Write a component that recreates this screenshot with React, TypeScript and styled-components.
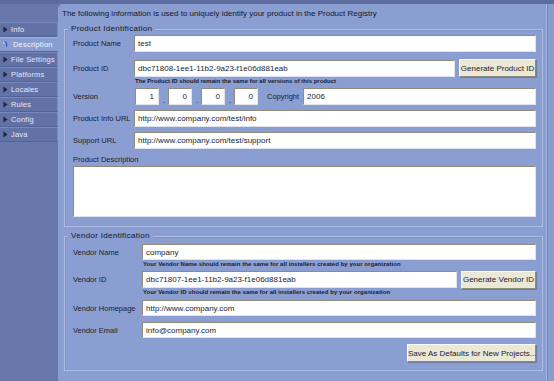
import styled, { createGlobalStyle } from "styled-components";

const GlobalStyle = createGlobalStyle`
    html, body {
        margin: 0;
        padding: 0;
        background: #6878aa;
    }
    body {
        font-family: "Liberation Sans", Arial, sans-serif;
        font-size: 8px;
        color: #1b1d30;
    }
`;

interface ITab {
    title: string,
    active?: boolean
}

const tabs: ITab[] = [
    { title: "Info" },
    { title: "Description", active: true },
    { title: "File Settings" },
    { title: "Platforms" },
    { title: "Locales" },
    { title: "Rules" },
    { title: "Config" },
    { title: "Java" },
];

const Arrow = () => (
    <svg width="5" height="7" viewBox="0 0 5 7">
        <path d="M0.5 0.5 L4.5 3.5 L0.5 6.5 Z" fill="#1d2240" />
    </svg>
);

const ActiveIcon = () => (
    <svg width="6" height="7" viewBox="0 0 6 7">
        <path d="M1 0.5 Q4.5 1.5 3.5 5.5" stroke="#3a4cc8" strokeWidth="1.2" fill="none" />
        <path d="M1 0.5 L1 2.5" stroke="#e8ecff" strokeWidth="1" />
    </svg>
);

export default function App() {
    return (
        <Frame>
            <GlobalStyle />
            <Sidebar>
                {tabs.map((tab) => (
                    <Tab key={tab.title} $active={!!tab.active}>
                        <span className="icon">{tab.active ? <ActiveIcon /> : <Arrow />}</span>
                        <span className="label">{tab.title}</span>
                    </Tab>
                ))}
            </Sidebar>
            <Panel>
                <Intro>The following information is used to uniquely identify your product in the Product Registry</Intro>

                <Group>
                    <legend>Product Identification</legend>
                    <Row $labelWidth={57} $mt={1}>
                        <Label>Product Name</Label>
                        <Field defaultValue="test" />
                    </Row>
                    <Row $labelWidth={57} $mt={7} $height={18}>
                        <Label>Product ID</Label>
                        <Field defaultValue="dbc71808-1ee1-11b2-9a23-f1e06d881eab" />
                        <Button $width={77}>Generate Product ID</Button>
                    </Row>
                    <Hint $indent={62}>The Product ID should remain the same for all versions of this product</Hint>
                    <Row $labelWidth={58} $mt={3}>
                        <Label>Version</Label>
                        <VersionBox defaultValue="1" />
                        <Dot>.</Dot>
                        <VersionBox defaultValue="0" />
                        <Dot>.</Dot>
                        <VersionBox defaultValue="0" />
                        <Dot>.</Dot>
                        <VersionBox defaultValue="0" />
                        <Copyright>Copyright</Copyright>
                        <Field defaultValue="2006" />
                    </Row>
                    <Row $labelWidth={57} $mt={5}>
                        <Label>Product Info URL</Label>
                        <Field defaultValue="http://www.company.com/test/info" />
                    </Row>
                    <Row $labelWidth={57} $mt={5}>
                        <Label>Support URL</Label>
                        <Field defaultValue="http://www.company.com/test/support" />
                    </Row>
                    <BlockLabel>Product Description</BlockLabel>
                    <Description />
                </Group>

                <Group $vendor>
                    <legend>Vendor Identification</legend>
                    <Row $labelWidth={65} $mt={3} $height={16}>
                        <Label>Vendor Name</Label>
                        <Field defaultValue="company" />
                    </Row>
                    <Hint $indent={70} $spacing={0.05}>Your Vendor Name should remain the same for all installers created by your organization</Hint>
                    <Row $labelWidth={65} $mt={3} $height={17}>
                        <Label>Vendor ID</Label>
                        <Field defaultValue="dbc71807-1ee1-11b2-9a23-f1e06d881eab" />
                        <Button $width={75}>Generate Vendor ID</Button>
                    </Row>
                    <Hint $indent={70} $spacing={0.05}>Your Vendor ID should remain the same for all installers created by your organization</Hint>
                    <Row $labelWidth={65} $mt={4} $height={16}>
                        <Label>Vendor Homepage</Label>
                        <Field defaultValue="http://www.company.com" />
                    </Row>
                    <Row $labelWidth={65} $mt={6} $height={16}>
                        <Label>Vendor Email</Label>
                        <Field defaultValue="info@company.com" />
                    </Row>
                    <Actions>
                        <Button $width={129}>Save As Defaults for New Projects...</Button>
                    </Actions>
                </Group>
            </Panel>
            <Strip />
        </Frame>
    );
}

const Frame = styled.div`
    display: flex;
    width: 554px;
    height: 381px;
    box-sizing: border-box;
    padding-top: 4px;
    background: #6878aa;
    overflow: hidden;
    background-image: linear-gradient(#5d6c9e, #5d6c9e);
    background-size: 100% 4px;
    background-repeat: no-repeat;
`;

const Sidebar = styled.div`
    width: 58px;
    flex-shrink: 0;
    padding-top: 18px;
    display: flex;
    flex-direction: column;
`;

const Tab = styled.div<{ $active: boolean }>`
    height: 15px;
    box-sizing: border-box;
    display: flex;
    align-items: center;
    gap: ${props => props.$active ? "4px" : "3px"};
    padding-left: 3px;
    background: ${props => props.$active ? "#8a9dd0" : "#6272a7"};
    border-top: 1px solid ${props => props.$active ? "#a2b2e0" : "#7888bb"};
    border-bottom: 1px solid #54639a;
    border-right: 1px solid ${props => props.$active ? "#8a9dd0" : "#7c8cbf"};
    margin-right: ${props => props.$active ? "-1px" : "0"};
    color: ${props => props.$active ? "#f2f5ff" : "#e2e8f6"};
    font-size: 7.5px;
    letter-spacing: 0.2px;

    .icon {
        display: flex;
        align-items: center;
    }
`;

const Panel = styled.div`
    flex: 1;
    background: #8a9ed1;
    border-top-left-radius: 5px;
    border-right: 1px solid #a9b8e2;
    padding: 5px 3px 0 6px;
    display: flex;
    flex-direction: column;
`;

const Strip = styled.div`
    width: 6px;
    flex-shrink: 0;
    background: #889cd0;
    border-left: 1px solid #7084b8;
`;

const Intro = styled.div`
    height: 10px;
    line-height: 10px;
    margin: 0 0 5px -2px;
    font-size: 8px;
    color: #161828;
`;

const Group = styled.fieldset<{ $vendor?: boolean }>`
    margin: ${props => props.$vendor ? "4px 0 0 0" : "0"};
    padding: 0 6px ${props => props.$vendor ? "8px" : "9px"} 8px;
    border: 1px solid #aebde6;
    box-shadow: inset 1px 1px 0 #7c90c3;
    display: flex;
    flex-direction: column;
    min-width: 0;

    legend {
        font-size: 8px;
        line-height: 10px;
        height: 10px;
        padding: 0 3px;
        margin-left: -5px;
        letter-spacing: 0.3px;
        color: #141626;
        background: #8a9ed1;
    }
`;

const Row = styled.div<{ $labelWidth: number, $mt: number, $height?: number }>`
    display: flex;
    align-items: center;
    gap: 4px;
    height: ${props => props.$height ?? 17}px;
    margin-top: ${props => props.$mt}px;

    & > span:first-child {
        width: ${props => props.$labelWidth}px;
    }

    input {
        height: ${props => Math.min(props.$height ?? 17, 17)}px;
    }
`;

const Label = styled.span`
    flex-shrink: 0;
    font-size: 7.5px;
    white-space: nowrap;
    color: #1b1d30;
`;

const BlockLabel = styled.div`
    margin-top: 6px;
    height: 10px;
    line-height: 10px;
    font-size: 7.5px;
`;

const Field = styled.input`
    flex: 1;
    min-width: 0;
    box-sizing: border-box;
    margin: 0;
    padding: 0 3px;
    background: #fff;
    border: 1px solid;
    border-color: #8f8c7c #dfe3ef #dfe3ef #8f8c7c;
    font-family: "Liberation Sans", Arial, sans-serif;
    font-size: 8px;
    color: #1b1d30;
    outline: none;
`;

const VersionBox = styled(Field)`
    flex: 0 0 24px;
    width: 24px;
    text-align: right;
    padding-right: 4px;
`;

const Dot = styled.span`
    width: 1px;
    align-self: flex-end;
    font-size: 8px;
    line-height: 8px;
    text-align: center;
`;

const Copyright = styled.span`
    margin-left: 5px;
    font-size: 7.5px;
`;

const Button = styled.button<{ $width: number }>`
    flex-shrink: 0;
    width: ${props => props.$width}px;
    height: 18px;
    margin: 0;
    padding: 0;
    background: #ebe8d8;
    border: 1px solid;
    border-color: #fbfaf4 #8d8b7c #8d8b7c #fbfaf4;
    box-shadow: 1px 1px 0 #6f7aa0;
    font-family: "Liberation Sans", Arial, sans-serif;
    font-size: 8px;
    color: #22222a;
    white-space: nowrap;
`;

const Hint = styled.div<{ $indent: number, $spacing?: number }>`
    margin-top: 1px;
    padding-left: ${props => props.$indent}px;
    height: 7px;
    line-height: 7px;
    font-size: 6px;
    font-weight: 700;
    letter-spacing: ${props => props.$spacing ?? 0}px;
    white-space: nowrap;
    color: #1a1c2c;
`;

const Description = styled.textarea`
    margin: 1px 0 0 0;
    height: 51px;
    box-sizing: border-box;
    resize: none;
    background: #fff;
    border: 1px solid;
    border-color: #8f8c7c #dfe3ef #dfe3ef #8f8c7c;
    outline: none;
`;

const Actions = styled.div`
    display: flex;
    justify-content: flex-end;
    margin-top: 6px;
`;
